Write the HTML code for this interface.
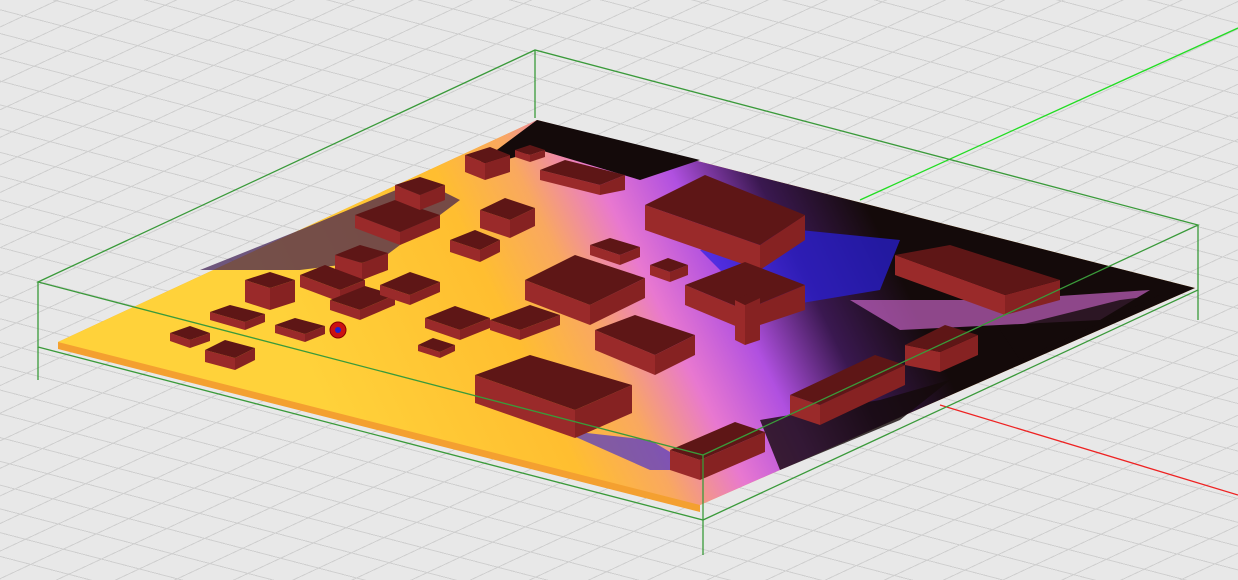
<!DOCTYPE html><html><head><style>
html,body{margin:0;padding:0;width:1238px;height:580px;overflow:hidden;background:#e6e6e6}
.bg{position:absolute;left:0;top:0;width:1238px;height:580px;
background:
repeating-linear-gradient(155deg, transparent 0 24px, #cfcfcf 24px 25px),
repeating-linear-gradient(194.6deg, transparent 0 22px, #cfcfcf 22px 23px),#e8e8e8}
svg{position:absolute;left:0;top:0}
.t{fill:#5e1616}.s1{fill:#9a2a2a}.s2{fill:#862222}
</style></head><body><div class="bg"></div>
<svg width="1238" height="580" viewBox="0 0 1238 580">
<defs>
<linearGradient id="g" gradientUnits="userSpaceOnUse" x1="330" y1="420" x2="850" y2="170">
<stop offset="0" stop-color="#ffd23a"/><stop offset="0.35" stop-color="#ffbe30"/>
<stop offset="0.48" stop-color="#f9a860"/><stop offset="0.6" stop-color="#e878d0"/>
<stop offset="0.72" stop-color="#b050e0"/><stop offset="0.85" stop-color="#3a1850"/>
<stop offset="1" stop-color="#140a0a"/></linearGradient>
</defs>
<line x1="860" y1="200" x2="1238" y2="28" stroke="#22dd22" stroke-width="1.3"/>
<line x1="940" y1="405" x2="1238" y2="495" stroke="#ee2222" stroke-width="1.3"/>
<polygon points="58,342 537,120 1195,288 700,505 700,512 58,349" fill="#f4a030"/>
<polygon points="58,342 537,120 1195,288 700,505" fill="url(#g)"/>
<polygon points="537,120 700,160 640,180 540,150 470,170" fill="#140a0a"/>
<polygon points="200,270 300,230 420,180 460,200 380,260 300,270" fill="#3a1850" opacity="0.7"/>
<polygon points="700,250 800,230 900,240 880,290 760,310" fill="#2a20e0" opacity="0.7"/>
<polygon points="850,300 1000,300 1150,290 1100,320 900,330" fill="#e070e0" opacity="0.6"/>
<polygon points="1000,330 1120,300 1160,295 1020,360" fill="#140a0a" opacity="0.8"/>
<polygon points="560,430 650,440 700,470 650,470" fill="#3020e0" opacity="0.6"/>
<polygon points="760,420 880,400 950,380 900,420 780,470" fill="#140a0a" opacity="0.8"/>
<g>
<g><polygon class="s1" points="475,375 575,410 575,438 475,403"/><polygon class="s2" points="575,410 632,385 632,413 575,438"/><polygon class="t" points="475,375 530,355 632,385 575,410"/></g>
<g><polygon class="s1" points="645,205 760,245 760,270 645,230"/><polygon class="s2" points="760,245 805,215 805,240 760,270"/><polygon class="t" points="645,205 705,175 805,215 760,245"/></g>
<g><polygon class="s1" points="895,255 1005,295 1005,315 895,275"/><polygon class="s2" points="1005,295 1060,280 1060,300 1005,315"/><polygon class="t" points="895,255 950,245 1060,280 1005,295"/></g>
<g><polygon class="s1" points="525,280 590,305 590,325 525,300"/><polygon class="s2" points="590,305 645,278 645,298 590,325"/><polygon class="t" points="525,280 575,255 645,278 590,305"/></g>
<g><polygon class="s1" points="595,330 655,355 655,375 595,350"/><polygon class="s2" points="655,355 695,335 695,355 655,375"/><polygon class="t" points="595,330 635,315 695,335 655,355"/></g>
<g><polygon class="s1" points="685,285 745,310 745,330 685,305"/><polygon class="s2" points="745,310 805,285 805,310 745,330"/><polygon class="t" points="685,285 745,262 805,285 745,310"/></g>
<g><polygon class="s1" points="735,300 745,305 745,345 735,340"/><polygon class="s2" points="745,305 760,298 760,340 745,345"/><polygon class="t" points="735,300 750,293 760,298 745,305"/></g>
<g><polygon class="s1" points="790,395 820,405 820,425 790,415"/><polygon class="s2" points="820,405 905,365 905,385 820,425"/><polygon class="t" points="790,395 875,355 905,365 820,405"/></g>
<g><polygon class="s1" points="670,450 700,460 700,480 670,470"/><polygon class="s2" points="700,460 765,432 765,452 700,480"/><polygon class="t" points="670,450 735,422 765,432 700,460"/></g>
<g><polygon class="s1" points="905,345 940,352 940,372 905,365"/><polygon class="s2" points="940,352 978,335 978,355 940,372"/><polygon class="t" points="905,345 945,325 978,335 940,352"/></g>
<g><polygon class="s1" points="245,280 270,288 270,310 245,302"/><polygon class="s2" points="270,288 295,280 295,302 270,310"/><polygon class="t" points="245,280 270,272 295,280 270,288"/></g>
<g><polygon class="s1" points="205,350 235,358 235,370 205,362"/><polygon class="s2" points="235,358 255,348 255,360 235,370"/><polygon class="t" points="205,350 225,340 255,348 235,358"/></g>
<g><polygon class="s1" points="465,155 485,163 485,180 465,172"/><polygon class="s2" points="485,163 510,155 510,172 485,180"/><polygon class="t" points="465,155 490,147 510,155 485,163"/></g>
<g><polygon class="s1" points="480,210 510,220 510,238 480,228"/><polygon class="s2" points="510,220 535,208 535,226 510,238"/><polygon class="t" points="480,210 505,198 535,208 510,220"/></g>
<g><polygon class="s1" points="335,255 362,263 362,280 335,272"/><polygon class="s2" points="362,263 388,253 388,270 362,280"/><polygon class="t" points="335,255 360,245 388,253 362,263"/></g>
<g><polygon class="s1" points="355,215 400,232 400,245 355,228"/><polygon class="s2" points="400,232 440,215 440,228 400,245"/><polygon class="t" points="355,215 395,200 440,215 400,232"/></g>
<g><polygon class="s1" points="395,185 420,195 420,210 395,200"/><polygon class="s2" points="420,195 445,185 445,200 420,210"/><polygon class="t" points="395,185 420,177 445,185 420,195"/></g>
<g><polygon class="s1" points="450,240 480,250 480,262 450,252"/><polygon class="s2" points="480,250 500,240 500,252 480,262"/><polygon class="t" points="450,240 475,230 500,240 480,250"/></g>
<g><polygon class="s1" points="300,275 340,290 340,302 300,287"/><polygon class="s2" points="340,290 365,280 365,292 340,302"/><polygon class="t" points="300,275 325,265 365,280 340,290"/></g>
<g><polygon class="s1" points="330,300 360,310 360,320 330,310"/><polygon class="s2" points="360,310 395,295 395,305 360,320"/><polygon class="t" points="330,300 365,286 395,295 360,310"/></g>
<g><polygon class="s1" points="210,312 245,322 245,330 210,320"/><polygon class="s2" points="245,322 265,314 265,322 245,330"/><polygon class="t" points="210,312 230,305 265,314 245,322"/></g>
<g><polygon class="s1" points="275,325 305,334 305,342 275,333"/><polygon class="s2" points="305,334 325,326 325,334 305,342"/><polygon class="t" points="275,325 295,318 325,326 305,334"/></g>
<g><polygon class="s1" points="170,333 190,340 190,348 170,341"/><polygon class="s2" points="190,340 210,333 210,341 190,348"/><polygon class="t" points="170,333 190,326 210,333 190,340"/></g>
<g><polygon class="s1" points="425,318 460,330 460,340 425,328"/><polygon class="s2" points="460,330 490,318 490,328 460,340"/><polygon class="t" points="425,318 455,306 490,318 460,330"/></g>
<g><polygon class="s1" points="490,320 520,330 520,340 490,330"/><polygon class="s2" points="520,330 560,315 560,325 520,340"/><polygon class="t" points="490,320 530,305 560,315 520,330"/></g>
<g><polygon class="s1" points="418,345 440,352 440,358 418,351"/><polygon class="s2" points="440,352 455,345 455,351 440,358"/><polygon class="t" points="418,345 433,338 455,345 440,352"/></g>
<g><polygon class="s1" points="540,170 600,185 600,195 540,180"/><polygon class="s2" points="600,185 625,175 625,190 600,195"/><polygon class="t" points="540,170 565,160 625,175 600,185"/></g>
<g><polygon class="s1" points="515,150 530,155 530,162 515,157"/><polygon class="s2" points="530,155 545,150 545,157 530,162"/><polygon class="t" points="515,150 530,145 545,150 530,155"/></g>
<g><polygon class="s1" points="590,245 620,255 620,265 590,255"/><polygon class="s2" points="620,255 640,247 640,257 620,265"/><polygon class="t" points="590,245 610,238 640,247 620,255"/></g>
<g><polygon class="s1" points="650,265 670,272 670,282 650,275"/><polygon class="s2" points="670,272 688,265 688,275 670,282"/><polygon class="t" points="650,265 668,258 688,265 670,272"/></g>
<g><polygon class="s1" points="380,285 410,295 410,305 380,295"/><polygon class="s2" points="410,295 440,282 440,292 410,305"/><polygon class="t" points="380,285 410,272 440,282 410,295"/></g>
</g>
<circle cx="338" cy="330" r="8" fill="#cc1111" stroke="#880000"/><circle cx="338" cy="330" r="3" fill="#2222cc"/>
<g fill="none" stroke="#3a9a3a" stroke-width="1.3">
<polygon points="38,282 535,50 1198,225 703,455"/>
<polyline points="38,282 38,347 703,520 1198,290 1198,225"/>
<line x1="703" y1="455" x2="703" y2="520"/>
<line x1="38" y1="347" x2="38" y2="380"/><line x1="703" y1="520" x2="703" y2="555"/><line x1="1198" y1="290" x2="1198" y2="320"/>
<line x1="535" y1="50" x2="535" y2="118"/>
</g>
</svg></body></html>
